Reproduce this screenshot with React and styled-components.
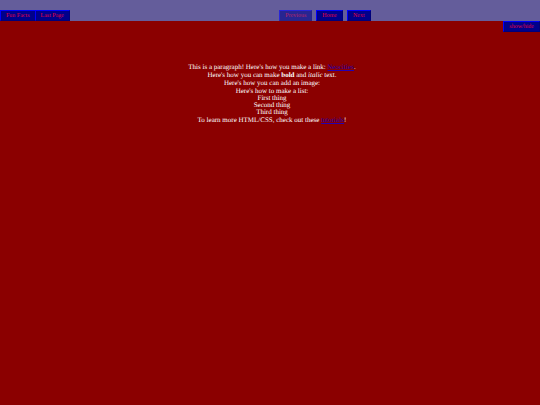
import React, { useState } from 'react';
import styled, { createGlobalStyle } from "styled-components";

const facts = ["First thing", "Second thing", "Third thing"];

const App = () => {
  const [showNav, setShowNav] = useState(true);

  return (
    <>
      <GlobalStyle />
      <Header>
        {showNav && (
          <>
            <Side>
              <NavButton type="button">Fun Facts</NavButton>
              <NavButton type="button">Last Page</NavButton>
            </Side>
            <Pager>
              <NavButton type="button" disabled>Previous</NavButton>
              <NavButton type="button">Home</NavButton>
              <NavButton type="button">Next</NavButton>
            </Pager>
          </>
        )}
      </Header>
      <ToggleRow>
        <NavButton type="button" onClick={() => setShowNav(!showNav)}>show/hide</NavButton>
      </ToggleRow>
      <Content>
        <p>This is a paragraph! Here's how you make a link: <a href="https://neocities.org">Neocities</a>.</p>
        <p>Here's how you can make <strong>bold</strong> and <em>italic</em> text.</p>
        <p>Here's how you can add an image:</p>
        <p>Here's how to make a list:</p>
        <List>
          {facts.map((fact) => (
            <li key={fact}>{fact}</li>
          ))}
        </List>
        <p>To learn more HTML/CSS, check out these <a href="https://neocities.org/tutorials">tutorials</a>!</p>
      </Content>
    </>
  );
};

const GlobalStyle = createGlobalStyle`
  body {
    margin: 0;
    background-color: #8b0000;
    color: #ffffff;
    font-family: "Liberation Serif", "Times New Roman", serif;
    font-size: 7px;
    line-height: 8px;
    text-rendering: geometricPrecision;
  }
`;

const Header = styled.header`
  display: grid;
  grid-template-columns: 1fr auto 1fr;
  align-items: end;
  height: 21px;
  background-color: #645d9b;
`;

const NavButton = styled.button`
  height: 11px;
  padding: 0 5px;
  border: 1px outset #0000cd;
  background-color: #00008b;
  color: #e6003c;
  font-family: "Liberation Serif", "Times New Roman", serif;
  font-size: 6px;
  line-height: 8px;
  text-rendering: geometricPrecision;
  cursor: pointer;
  &:disabled {
    opacity: 0.6;
    cursor: default;
  }
`;

const Side = styled.div`
  display: flex;
  ${NavButton} + ${NavButton} {
    margin-left: -1px;
  }
`;

const Pager = styled.nav`
  display: flex;
  gap: 4px;
  padding-left: 110px;
`;

const ToggleRow = styled.div`
  display: flex;
  justify-content: flex-end;
`;

const Content = styled.main`
  padding: 31px 0 0 4px;
  text-align: center;
  p {
    margin: 0;
  }
  a {
    color: #2400b4;
    text-decoration-skip-ink: none;
  }
`;

const List = styled.ul`
  margin: 0;
  padding: 0;
  list-style: none;
  line-height: 7px;
`;

export default App;
